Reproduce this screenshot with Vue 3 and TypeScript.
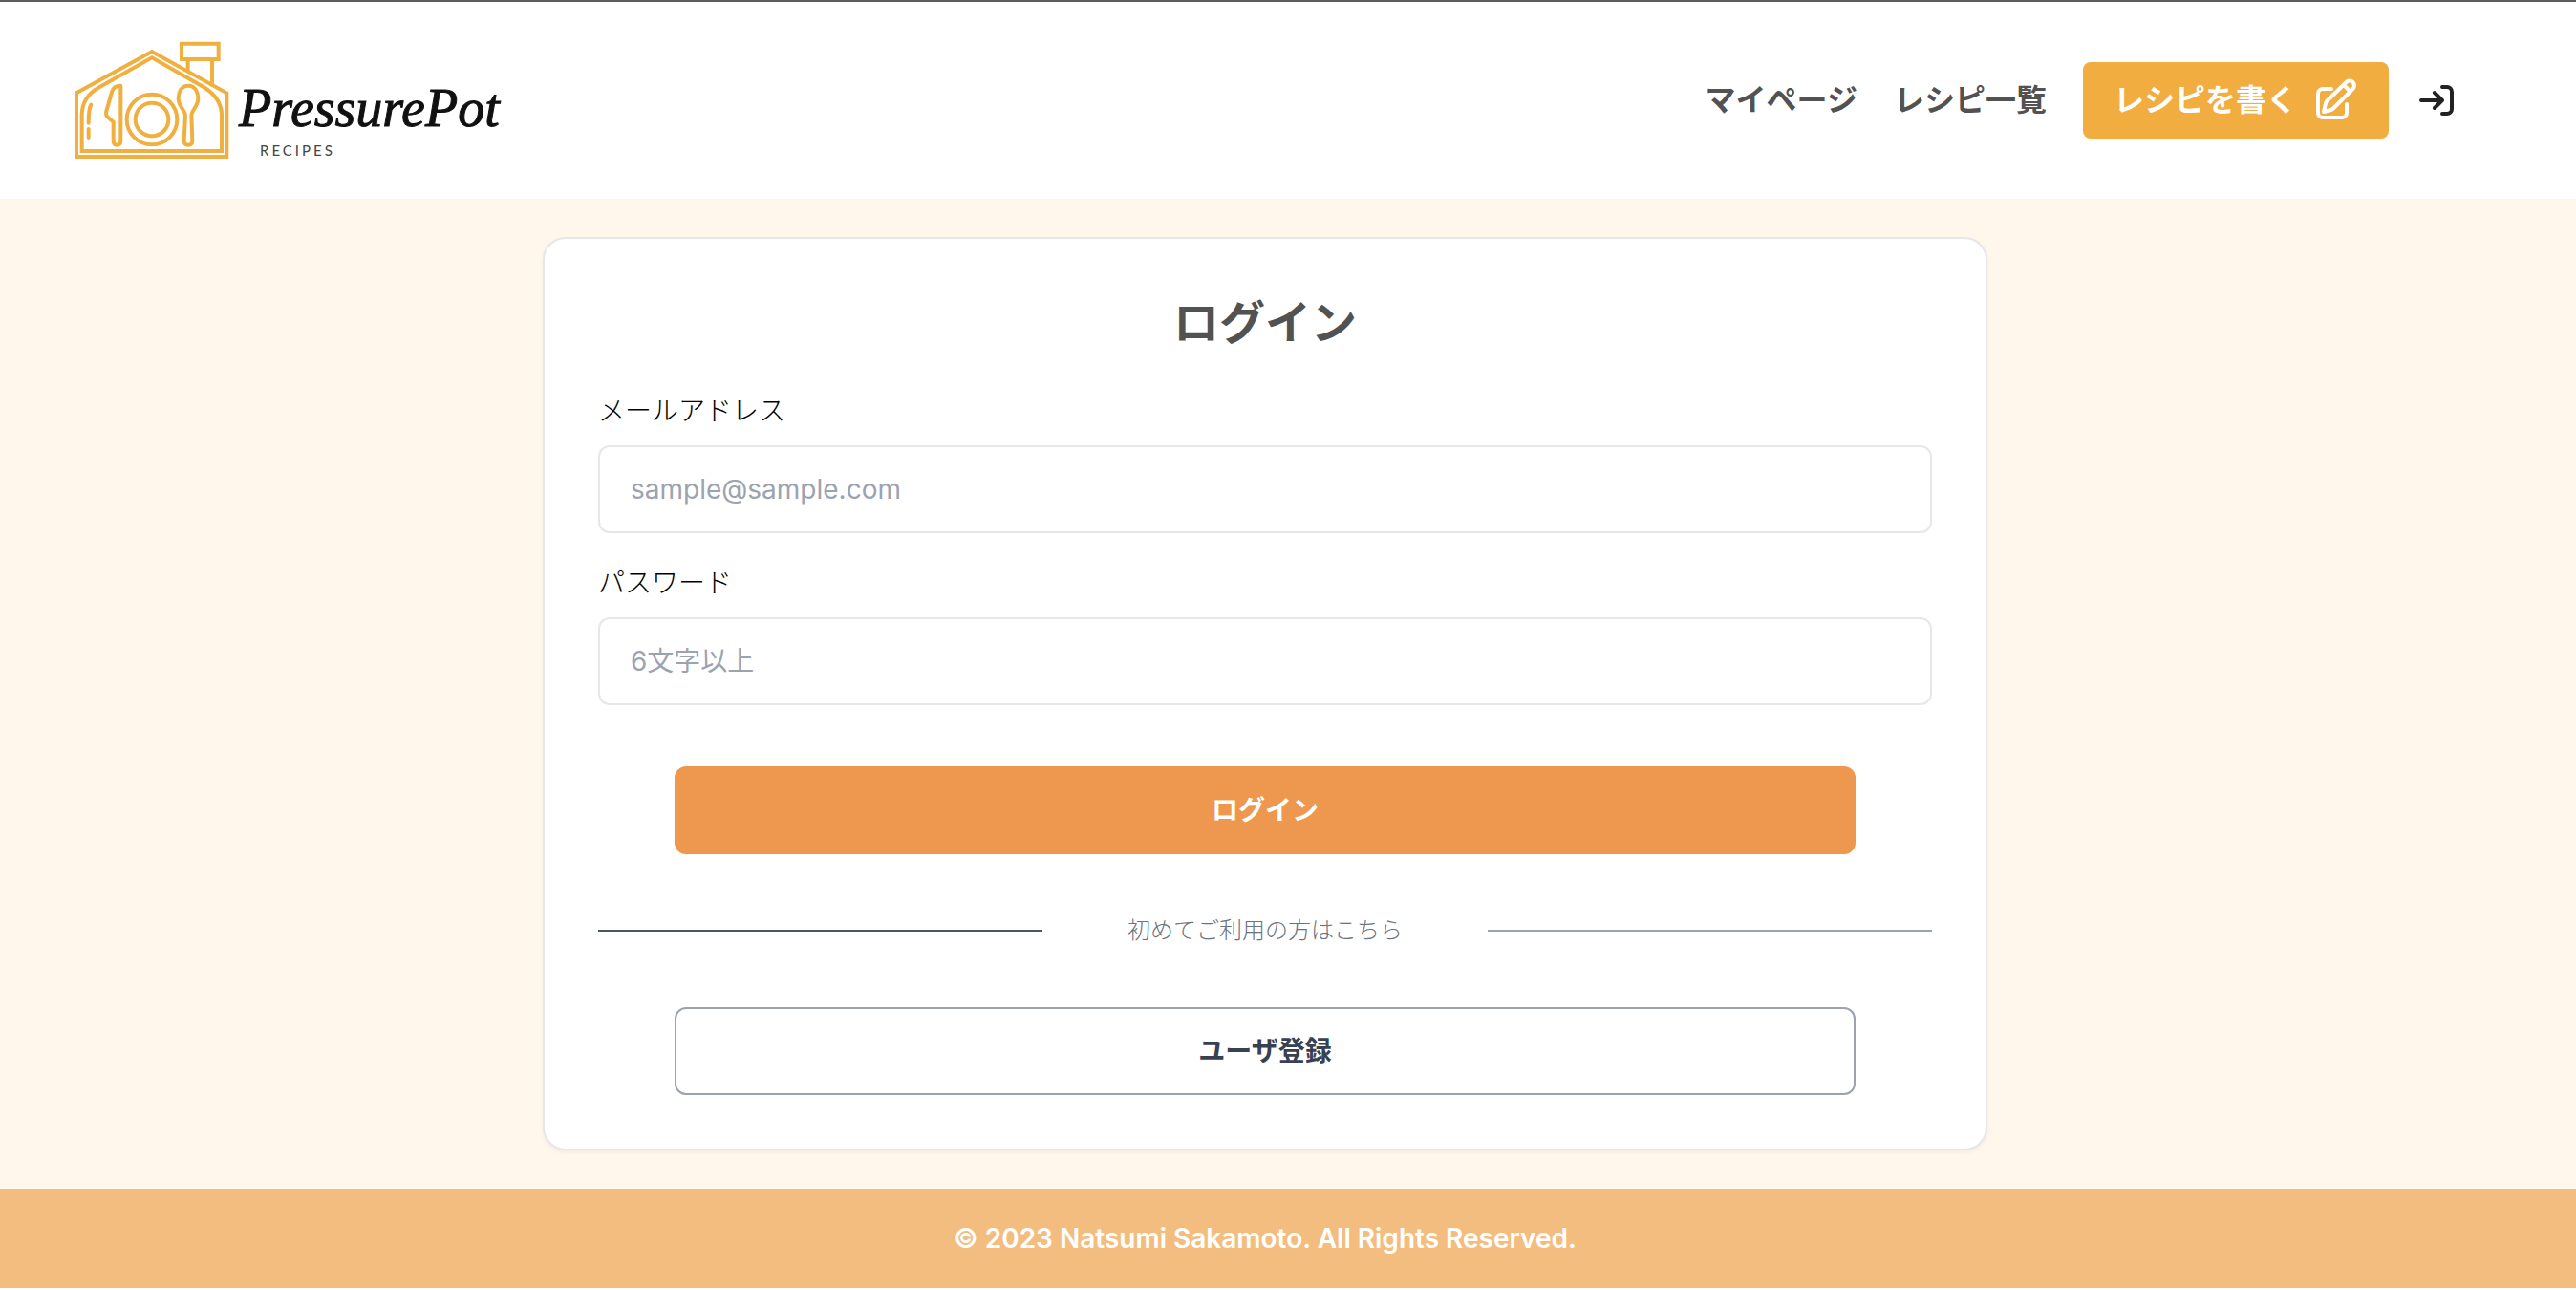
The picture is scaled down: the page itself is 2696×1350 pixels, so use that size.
<script setup lang="ts">
import { ref } from 'vue'

interface NavLink {
  label: string
  href: string
}

const navLinks: NavLink[] = [
  { label: 'マイページ', href: '#mypage' },
  { label: 'レシピ一覧', href: '#recipes' },
]

const email = ref<string>('')
const password = ref<string>('')
</script>

<template>
  <div class="page">
    <header class="header">
      <a class="logo" href="#home" aria-label="PressurePot Recipes">
        <svg width="480" height="150" viewBox="0 0 480 150" aria-hidden="true">
          <g transform="scale(0.33333)" fill="none" stroke="#f0b040" stroke-width="12" stroke-linejoin="round" stroke-linecap="round">
            <!-- house -->
            <path stroke-linejoin="miter" d="M60 202 L297 72 L532 202 V402 H60 Z" />
            <path stroke-linejoin="miter" d="M77 384 V270 Q78 215 128 186 L297 91 L464 186 Q515 220 516 270 V384 Z" />
            <!-- chimney -->
            <path stroke-linejoin="miter" d="M390 47 H506 V96 H390 Z M410 98 V132 M486 98 V176" />
            <!-- wall highlights -->
            <path d="M106 239 Q98 252 98 296 M98 315 V342" />
            <!-- knife -->
            <path d="M199 179 V350 Q199 365 187 365 Q176 365 176 350 V293 L157 277 Q151 271 154 259 L171 199 Q176 179 199 179 Z" />
            <!-- plate -->
            <circle cx="297" cy="285" r="79" />
            <circle cx="297" cy="285" r="52" />
            <!-- spoon -->
            <path d="M411 179 C433 179 442 200 442 219 C442 245 421 256 421 272 L424 351 Q424 365 411 365 Q398 365 398 351 L402 272 C402 256 380 245 380 219 C380 200 389 179 411 179 Z" />
          </g>
          <text class="logo-name" x="190" y="102">PressurePot</text>
          <text class="logo-sub" x="212" y="133">RECIPES</text>
        </svg>
      </a>

      <nav class="nav">
        <a v-for="link in navLinks" :key="link.href" class="nav-link" :href="link.href">{{ link.label }}</a>
        <button class="write" type="button">
          <span>レシピを書く</span>
          <svg width="48" height="48" viewBox="0 0 48 48" fill="none" stroke="currentColor" stroke-linecap="round" stroke-linejoin="round" aria-hidden="true">
            <path stroke-width="4" d="M20 12 H11 a5 5 0 0 0 -5 5 V37 a5 5 0 0 0 5 5 H31 a5 5 0 0 0 5 -5 V28" />
            <path stroke-width="4" d="M12 36 L14 27 Q14.500 25.500 15.500 24.500 L35.500 5 A4.900 4.900 0 0 1 42.500 12 L22.500 32 Q21 33.500 19.500 34 Z M33 8 L39.500 14.500" />
          </svg>
        </button>
        <a class="login-link" href="#login" aria-label="ログイン">
          <svg width="48" height="48" viewBox="0 0 48 48" fill="none" stroke="currentColor" stroke-width="4" stroke-linecap="round" stroke-linejoin="round" aria-hidden="true">
            <path d="M8 24 H30 M22 16 L30 24 L22 32 M30 10 H35 A5 5 0 0 1 40 15 V33 A5 5 0 0 1 35 38 H30" />
          </svg>
        </a>
      </nav>
    </header>

    <main class="main">
      <form class="card" @submit.prevent>
        <h1 class="title">ログイン</h1>
        <div class="field">
          <label for="email">メールアドレス</label>
          <input id="email" v-model="email" type="email" placeholder="sample@sample.com" />
        </div>
        <div class="field">
          <label for="password">パスワード</label>
          <input id="password" v-model="password" type="password" placeholder="6文字以上" />
        </div>
        <button class="btn btn-primary" type="submit">ログイン</button>
        <div class="divider">
          <span class="rule rule-dark"></span>
          <span class="divider-text">初めてご利用の方はこちら</span>
          <span class="rule"></span>
        </div>
        <button class="btn btn-outline" type="button">ユーザ登録</button>
      </form>
    </main>

    <footer class="footer">© 2023 Natsumi Sakamoto. All Rights Reserved.</footer>
  </div>
</template>

<style>
body {
  margin: 0;
  background: #ffffff;
}
</style>

<style scoped>
.page {
  font-family: Inter, "Noto Sans CJK JP", sans-serif;
  font-size: 28px;
  line-height: 40px;
  color: #000000;
  background: #fff6ec;
}

.page *,
.page {
  box-sizing: border-box;
}

.header {
  display: flex;
  align-items: center;
  justify-content: space-between;
  padding: 28px 122px 28px 60px;
  border-top: 2px solid #5e5c5c;
  background: #ffffff;
}

.logo,
.logo svg,
.login-link svg,
.write svg {
  display: block;
}

.logo-name {
  font-family: "Liberation Serif", serif;
  font-style: italic;
  font-size: 56px;
  fill: #111111;
  stroke: #111111;
  stroke-width: 1px;
}

.logo-sub {
  font-family: Lato, sans-serif;
  font-size: 15px;
  letter-spacing: 3px;
  fill: #444444;
}

.nav {
  display: flex;
  align-items: center;
}

.nav-link {
  margin-right: 38px;
  font-size: 32px;
  font-weight: 600;
  color: #525252;
  text-decoration: none;
}

.write {
  display: flex;
  align-items: center;
  gap: 16px;
  height: 80px;
  margin-right: 26px;
  padding: 0 32px;
  border: 0;
  border-radius: 8px;
  background: #f1ad3f;
  color: #ffffff;
  font: inherit;
  font-size: 32px;
  font-weight: 600;
}

.login-link {
  color: #222222;
}

.main {
  padding: 40px 48px 40px 0;
}

.card {
  display: flex;
  flex-direction: column;
  max-width: 1512px;
  margin: 0 auto;
  padding: 56px;
  border: 2px solid #e5e7eb;
  border-radius: 24px;
  background: #ffffff;
  box-shadow: 0 2px 4px rgba(0, 0, 0, 0.05);
}

.title {
  margin: 0 0 40px;
  font-size: 48px;
  line-height: 64px;
  font-weight: 600;
  text-align: center;
  color: #525252;
}

.field {
  display: flex;
  flex-direction: column;
  gap: 16px;
}

.field label {
  font-weight: 300;
}

.field + .field {
  margin-top: 32px;
}

.field input {
  width: 100%;
  height: 92px;
  padding: 0 32px;
  border: 2px solid #e5e7eb;
  border-radius: 12px;
  background: #ffffff;
  font: inherit;
}

.field input::placeholder {
  color: #9ca3af;
  opacity: 1;
}

.btn {
  height: 92px;
  margin: 0 80px;
  border-radius: 12px;
  font: inherit;
  font-weight: 600;
}

.btn-primary {
  margin-top: 64px;
  border: 0;
  background: #ee974e;
  color: #ffffff;
}

.btn-outline {
  border: 2px solid #9ca3af;
  background: #ffffff;
  color: #374151;
}

.divider {
  display: grid;
  grid-template-columns: repeat(3, 1fr);
  align-items: center;
  margin: 60px 0;
}

.rule {
  height: 2px;
  background: #9ca3af;
}

.rule-dark {
  background: #4b5563;
}

.divider-text {
  font-size: 24px;
  font-weight: 300;
  text-align: center;
  color: #6b7280;
}

.footer {
  padding: 24px 48px 24px 0;
  background: #f3bd80;
  color: #ffffff;
  font-weight: 600;
  line-height: 56px;
  text-align: center;
}
</style>
